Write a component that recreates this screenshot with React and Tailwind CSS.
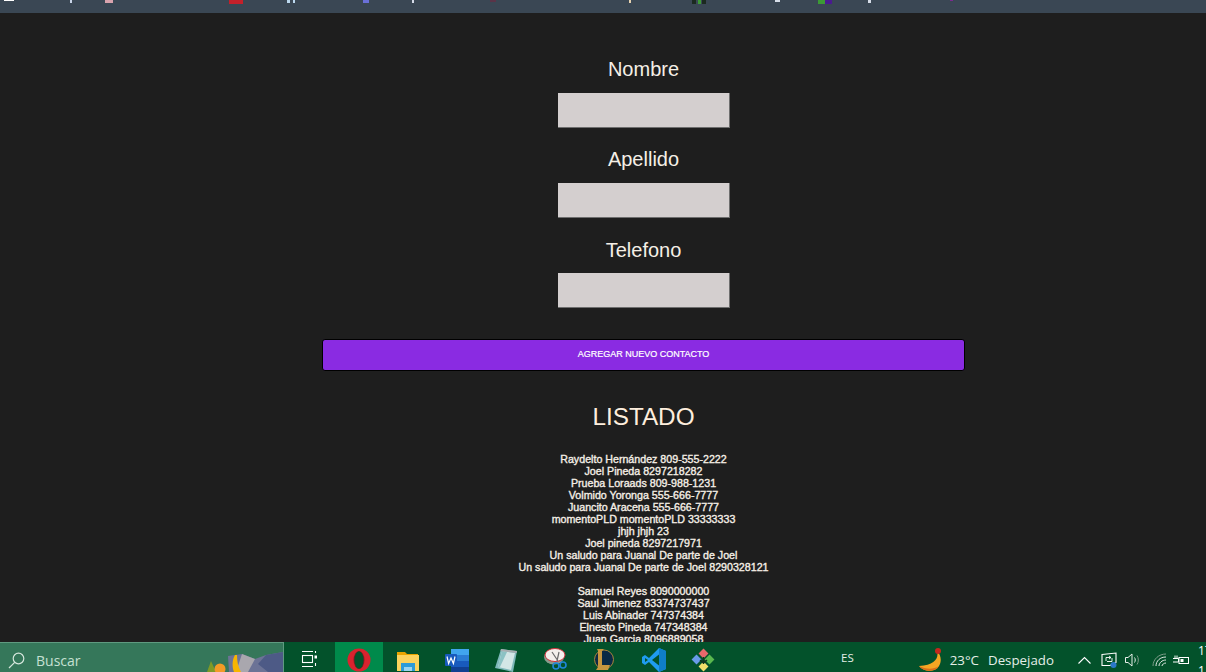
const contactos = [
  'Raydelto Hernández 809-555-2222',
  'Joel Pineda 8297218282',
  'Prueba Loraads 809-988-1231',
  'Volmido Yoronga 555-666-7777',
  'Juancito Aracena 555-666-7777',
  'momentoPLD momentoPLD 33333333',
  'jhjh jhjh 23',
  'Joel pineda 8297217971',
  'Un saludo para Juanal De parte de Joel',
  'Un saludo para Juanal De parte de Joel 8290328121',
  '',
  'Samuel Reyes 8090000000',
  'Saul Jimenez 83374737437',
  'Luis Abinader 747374384',
  'Elnesto Pineda 747348384',
  'Juan Garcia 8096889058',
];

// bottom edges of the bookmarks bar that is scrolled off the top
const marcas = [
  { w: 10, h: 1, gap: 4, color: 'bg-white' },
  { w: 2, h: 3, gap: 56, color: 'bg-[#c8d4e8]' },
  { w: 8, h: 3, gap: 33, color: 'bg-[#d9a3ad]' },
  { w: 14, h: 4, gap: 116, color: 'bg-[#c4202a]' },
  { w: 3, h: 3, gap: 44, color: 'bg-[#bcd9ef]' },
  { w: 2, h: 3, gap: 3, color: 'bg-[#bcd9ef]' },
  { w: 6, h: 3, gap: 68, color: 'bg-[#6a70d8]' },
  { w: 2, h: 3, gap: 43, color: 'bg-[#d5dbe8]' },
  { w: 6, h: 2, gap: 76, color: 'bg-[#5a3448]' },
  { w: 2, h: 3, gap: 133, color: 'bg-[#e6d2b0]' },
  { w: 4, h: 4, gap: 61, color: 'bg-[#1b2a20]' },
  { w: 3, h: 4, gap: 2, color: 'bg-[#3c9a35]' },
  { w: 4, h: 4, gap: 1, color: 'bg-[#1b2a20]' },
  { w: 5, h: 2, gap: 69, color: 'bg-[#d6dde8]' },
  { w: 7, h: 4, gap: 38, color: 'bg-[#3c9a35]' },
  { w: 7, h: 4, gap: 0, color: 'bg-[#4a1a90]' },
  { w: 3, h: 3, gap: 36, color: 'bg-[#d6dde8]' },
  { w: 3, h: 1, gap: 79, color: 'bg-[#7a2a90]' },
];

function TopBar() {
  return (
    <div className="h-[13px] shrink-0 bg-[#3a4754] flex items-start overflow-hidden">
      {marcas.map((m, i) => (
        <div
          key={i}
          className={m.color}
          style={{ width: m.w, height: m.h, marginLeft: m.gap }}
        />
      ))}
    </div>
  );
}

function Campo({ label, className = 'h-[23px] mb-[12px]' }) {
  return (
    <div className="flex flex-col items-center">
      <label className={`text-[20px] leading-[23px] text-[#f5efe6] ${className}`}>{label}</label>
      <input
        type="text"
        className="w-[172px] h-[35px] bg-[#d4cfcf] border-b border-r border-[#6e6e6e] outline-none"
      />
    </div>
  );
}

function SearchIcon() {
  return (
    <svg width="17" height="17" viewBox="0 0 17 17" fill="none" stroke="#d5e6dc" strokeWidth="1.2">
      <circle cx="10.5" cy="6.5" r="5.3" />
      <path d="M6.7 10.3 1 16" />
    </svg>
  );
}

function Paisaje() {
  return (
    <svg width="79" height="20" viewBox="0 0 79 20" className="shrink-0">
      <path d="M25 20 24 4 38 2 51 7 62 3 79 0V20Z" fill="#6c7396" />
      <path d="M38 2 51 7 44 20H32Z" fill="#a9a7ae" />
      <path d="M62 3 79 0V20H64L54 12Z" fill="#4d5a86" />
      <path d="M3 20 7 9 12 20Z" fill="#7f9a26" />
      <circle cx="16" cy="17" r="5.5" fill="#f39a26" />
      <path d="M31 3C28 8 28 15 30 20H37C34 15 33 9 33 3Z" fill="#f7b500" />
    </svg>
  );
}

function TaskView() {
  return (
    <svg width="17" height="16" viewBox="0 0 17 16" fill="none" stroke="#fff" strokeWidth="1.1">
      <path d="M1 .5H12M1 15.5H12" />
      <rect x="1.5" y="4.5" width="10" height="7" />
      <path d="M14.5 0V2M14.5 12V15" />
      <rect x="13.5" y="4.5" width="2.5" height="3" fill="#fff" stroke="none" />
    </svg>
  );
}

function Opera() {
  return (
    <svg width="24" height="24" viewBox="0 0 24 24">
      <ellipse cx="12" cy="12" rx="11.5" ry="11.5" fill="#d9232e" />
      <ellipse cx="12" cy="12" rx="5.5" ry="9" fill="#8f1420" />
      <ellipse cx="12" cy="12" rx="4.6" ry="8.8" fill="#03522b" />
    </svg>
  );
}

function Carpeta() {
  return (
    <svg width="22" height="22" viewBox="0 0 22 22">
      <path d="M0 3h8l2 2h11v3H0Z" fill="#e8a500" />
      <rect x="0" y="6" width="22" height="16" fill="#fbd35d" />
      <path d="M4 14h14v8h-3v-4H7v4H4Z" fill="#2d9bd8" />
      <rect x="7" y="18" width="8" height="4" fill="#9ad4f0" />
    </svg>
  );
}

function Word() {
  return (
    <svg width="24" height="24" viewBox="0 0 24 24">
      <rect x="6" y="1" width="18" height="23" rx="1" fill="#2b7cd3" />
      <rect x="6" y="1" width="18" height="6" fill="#41a5ee" />
      <rect x="6" y="13" width="18" height="6" fill="#185abd" />
      <rect x="6" y="19" width="18" height="5" fill="#103f91" />
      <rect x="0" y="6" width="12" height="12" rx="1" fill="#185abd" />
      <path d="M2 8.5 3.6 15.5 6 10 8.4 15.5 10 8.5" fill="none" stroke="#fff" strokeWidth="1.2" />
    </svg>
  );
}

function Notas() {
  return (
    <svg width="22" height="24" viewBox="0 0 22 24">
      <path d="M6 1 22 3 18 24 0 20Z" fill="#7fb8ba" />
      <path d="M7 3 20 5 16 22 3 19Z" fill="#d3e6e6" />
      <path d="M7 3 12 4 5 19 3 19Z" fill="#8cc2c4" />
      <path d="M6 1 22 3 21.6 5 5.5 3Z" fill="#a8adb0" />
    </svg>
  );
}

function Recortes() {
  return (
    <svg width="24" height="24" viewBox="0 0 24 24">
      <ellipse cx="10" cy="9" rx="10" ry="7.5" fill="#8a9a8c" />
      <ellipse cx="11" cy="7" rx="10" ry="6.5" fill="#f4f0ec" stroke="#d3303a" strokeWidth="1" />
      <path d="M8 4 14 13M15 4 13 13" stroke="#6a6a6a" strokeWidth="1.2" />
      <circle cx="12" cy="18" r="3" fill="none" stroke="#1f86d8" strokeWidth="1.6" />
      <circle cx="19" cy="17" r="3" fill="none" stroke="#1f86d8" strokeWidth="1.6" />
    </svg>
  );
}

function League() {
  return (
    <svg width="21" height="24" viewBox="0 0 21 24">
      <circle cx="11" cy="11.5" r="9.5" fill="#0b2a45" stroke="#a9843c" strokeWidth="1" />
      <path d="M4 1h7L9 3v14h8l-2 5H3l2-3V3Z" fill="#c6963f" />
    </svg>
  );
}

function VsCode() {
  return (
    <svg width="24" height="24" viewBox="0 0 24 24">
      <path d="M17 0 24 3V21L17 24 7 14 3 17 0 15V9L3 7 7 10Z" fill="#1f9cf0" />
      <path d="M17 6.5 10 12 17 17.5Z" fill="#03522b" />
      <path d="M3 10 6 12 3 14Z" fill="#03522b" />
      <path d="M17 0 24 3V21L17 24Z" fill="#0f7ec9" />
    </svg>
  );
}

function Kraken() {
  return (
    <svg width="24" height="24" viewBox="0 0 24 24">
      <rect x="9" y="2" width="7" height="7" transform="rotate(45 12.5 5.5)" fill="#e8696b" />
      <rect x="2" y="8" width="7" height="7" transform="rotate(45 5.5 11.5)" fill="#6a9bea" />
      <rect x="15" y="8" width="7" height="7" transform="rotate(45 18.5 11.5)" fill="#59b84f" />
      <rect x="9" y="15" width="7" height="7" transform="rotate(45 12.5 18.5)" fill="#f2e06a" />
      <path d="M12.5 9V16M9 12l3.5 3 3.5-3" fill="none" stroke="#14351f" strokeWidth="1.4" />
    </svg>
  );
}

function Luna() {
  return (
    <svg width="24" height="24" viewBox="0 0 24 24">
      <path d="M19 3C21 10 17 17 1 18C5 24 17 25 21 18C24 13 23 7 19 3Z" fill="#f5a623" />
      <path d="M1 18C5 24 17 25 21 18C15 22 7 21 1 18Z" fill="#d9701b" />
      <circle cx="20" cy="3" r="3" fill="#c4281e" />
    </svg>
  );
}

function Bandeja() {
  return (
    <div className="flex items-center ml-[24px] pt-[5px] shrink-0">
      <svg width="13" height="8" viewBox="0 0 13 8" fill="none" stroke="#fff" strokeWidth="1.1">
        <path d="M.5 7.5 6.5 1.5 12.5 7.5" />
      </svg>
      <svg width="16" height="16" viewBox="0 0 16 16" className="ml-[10px]" fill="none" stroke="#fff" strokeWidth="1.1">
        <path d="M1 2.5 15 1V10.5L9 13.5H1Z" />
        <path d="M5 9V5.5H10M8 4 10 5.5 8 7M11 6V9.5H6" strokeWidth="0.9" />
        <circle cx="12.5" cy="13" r="3" fill="#2a78c8" stroke="none" />
      </svg>
      <svg width="16" height="14" viewBox="0 0 16 14" className="ml-[8px]" fill="none" stroke="#e8f0ea" strokeWidth="1">
        <path d="M.5 4.5H3L7 1V13L3 9.5H.5Z" />
        <path d="M9.5 4.5C10.5 6 10.5 8 9.5 9.5" />
        <path d="M12 2.5C13.8 5 13.8 9 12 11.5" stroke="#7b9c88" />
      </svg>
      <svg width="15" height="13" viewBox="0 0 15 13" className="ml-[11px]" fill="none" stroke="#dfe8e2" strokeWidth="1">
        <path d="M1 13C1 6 7 1 14 1" stroke="#7b9c88" />
        <path d="M4 13C4 8 8 4 14 4" />
        <path d="M7 13C7 10 10 7 14 7" />
        <path d="M10 13C10 11.5 12 10 14 10" />
      </svg>
      <svg width="16" height="10" viewBox="0 0 16 10" className="ml-[6px]" fill="none" stroke="#fff" strokeWidth="1">
        <rect x="6" y="2.5" width="9.5" height="6" />
        <rect x="7.5" y="4" width="3" height="3" fill="#fff" stroke="none" />
        <path d="M0 3.5H5.5V7H0M2 .5V3.5M4 .5V3.5" />
      </svg>
    </div>
  );
}

function TaskBar() {
  return (
    <div className="h-[30px] shrink-0 bg-[#03522b] flex items-stretch overflow-hidden font-['Open_Sans',sans-serif]">
      <div className="w-[284px] shrink-0 bg-[#35775a] border-t border-r border-[#5f9a80] flex items-center overflow-hidden">
        <span className="ml-[8px] mt-[5px]"><SearchIcon /></span>
        <span className="ml-[11px] mt-[5px] text-[14px] text-[#c6e0d2] flex-1">Buscar</span>
        <span className="self-end"><Paisaje /></span>
      </div>
      <div className="w-[51px] shrink-0 flex items-center justify-center pt-[3px] pr-[1px]">
        <TaskView />
      </div>
      <div className="w-[48px] shrink-0 bg-[#008a4b] flex items-center justify-center pt-[6px]">
        <Opera />
      </div>
      <div className="flex items-center pt-[6px] shrink-0">
        <span className="ml-[14px]"><Carpeta /></span>
        <span className="ml-[26px]"><Word /></span>
        <span className="ml-[26px]"><Notas /></span>
        <span className="ml-[27px]"><Recortes /></span>
        <span className="ml-[25px]"><League /></span>
        <span className="ml-[28px]"><VsCode /></span>
        <span className="ml-[25px]"><Kraken /></span>
      </div>
      <div className="flex items-center shrink-0 text-[#e4eee8]">
        <span className="ml-[126px] text-[11.5px] mt-[1px]">ES</span>
        <span className="ml-[64px] pt-[5px]"><Luna /></span>
        <span className="ml-[8px] mt-[7px] text-[13.3px] whitespace-nowrap">23°C</span>
        <span className="ml-[9px] mt-[7px] text-[13.3px] whitespace-nowrap">Despejado</span>
        <Bandeja />
        <div className="ml-[9px] text-[12px] leading-[20px] text-white mt-[7px]">
          <div>17</div>
          <div>1</div>
        </div>
      </div>
    </div>
  );
}

export default function App() {
  return (
    <div className="h-[672px] w-[1206px] flex flex-col overflow-hidden bg-[#1e1e1e] font-['Liberation_Sans',Arial,sans-serif]">
      <TopBar />
      <main className="flex-1 overflow-hidden flex flex-col items-center pt-[45px]">
        <div className="shrink-0 flex flex-col items-center gap-[20px] ml-[81px]">
          <Campo label="Nombre" />
          <Campo label="Apellido" />
          <Campo label="Telefono" className="h-[23px] mt-[1px] mb-[11px]" />
        </div>
        <button className="shrink-0 mt-[31px] ml-[81px] w-[643px] h-[32px] bg-[#8a2be2] border border-black rounded-[3px] text-white text-[9px] uppercase [-webkit-text-stroke:0.2px_#fff]">
          Agregar nuevo contacto
        </button>
        <h2 className="shrink-0 mt-[32px] ml-[81px] text-[24.3px] leading-[28px] text-[#fdeedd]">LISTADO</h2>
        <ul className="shrink-0 mt-[22px] ml-[81px] text-center text-[10.67px] leading-[12px] text-[#f5efe6] whitespace-nowrap [-webkit-text-stroke:0.35px_#f5efe6]">
          {contactos.map((c, i) => (
            <li key={i} className="h-[12px]">{c}</li>
          ))}
        </ul>
      </main>
      <TaskBar />
    </div>
  );
}
